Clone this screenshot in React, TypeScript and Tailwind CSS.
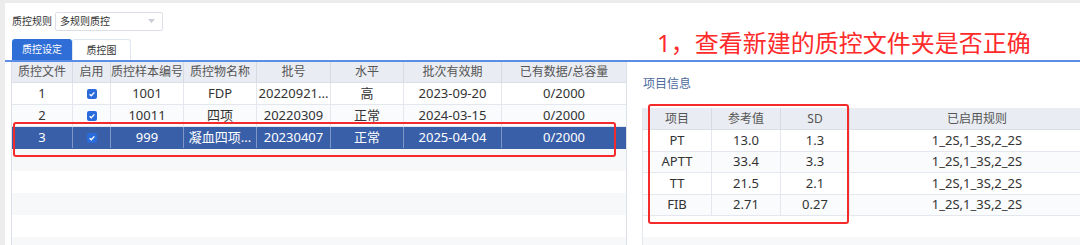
import React from "react";

const leftCols = [61, 38, 73, 73, 74, 73, 98, 124];
const leftHead = ["质控文件", "启用", "质控样本编号", "质控物名称", "批号", "水平", "批次有效期", "已有数据/总容量"];
const leftRows = [
  ["1", "", "1001", "FDP", "20220921...", "高", "2023-09-20", "0/2000"],
  ["2", "", "10011", "四项", "20220309", "正常", "2024-03-15", "0/2000"],
  ["3", "", "999", "凝血四项...", "20230407", "正常", "2025-04-04", "0/2000"],
];

const rightCols = [69, 69, 69, 254];
const rightHead = ["项目", "参考值", "SD", "已启用规则"];
const rightRows = [
  ["PT", "13.0", "1.3", "1_2S,1_3S,2_2S"],
  ["APTT", "33.4", "3.3", "1_2S,1_3S,2_2S"],
  ["TT", "21.5", "2.1", "1_2S,1_3S,2_2S"],
  ["FIB", "2.71", "0.27", "1_2S,1_3S,2_2S"],
];

function Check() {
  return (
    <span className="inline-flex w-[10px] h-[10px] rounded-[2px] bg-[#2a6bdc] items-center justify-center">
      <svg width="8" height="8" viewBox="0 0 8 8">
        <path d="M1.6 4.2 L3.3 5.8 L6.4 2.4" stroke="white" strokeWidth="1.3" fill="none" />
      </svg>
    </span>
  );
}

export default function App() {
  const font = { fontFamily: '"Noto Sans", "Noto Sans CJK SC", sans-serif' };
  return (
    <div className="w-[1080px] h-[245px] bg-[#ececec] pt-[3px] pl-[5px] overflow-hidden relative" style={font}>
      <div className="bg-white h-full flex flex-col">
        {/* rule selector */}
        <div className="flex items-center pl-[7px] pt-[8px] h-[28px]">
          <span className="text-[10px] text-[#333] w-[43px]">质控规则</span>
          <div className="w-[108px] h-[19px] border border-[#dcdfe6] rounded-[2px] flex items-center justify-between pl-[4px] pr-[7px]">
            <span className="text-[10px] text-[#333]">多规则质控</span>
            <svg width="7" height="4" viewBox="0 0 7 4"><path d="M0 0 L7 0 L3.5 4 Z" fill="#c8ccd4" /></svg>
          </div>
        </div>
        {/* tabs */}
        <div className="flex items-end pl-[7px] mt-[8px] border-b-2 border-[#5a8de3] h-[23px]">
          <div className="w-[60px] h-[21px] bg-[#2f6ed6] text-white text-[10px] rounded-t-[3px] flex items-center justify-center">质控设定</div>
          <div className="w-[59px] h-[21px] bg-white text-[#333] text-[10px] rounded-t-[3px] border border-b-0 border-[#dfe6f2] flex items-center justify-center">质控图</div>
        </div>
        {/* body */}
        <div className="flex flex-1 min-h-0 overflow-hidden">
          {/* left table */}
          <div className="ml-[6px] w-[616px] shrink-0 border-l border-r border-[#dcdfe6] flex flex-col overflow-hidden">
            <div className="flex h-[21px] bg-[#e9ecf2] border-b border-[#dcdfe6] shrink-0">
              {leftHead.map((h, i) => (
                <div key={i} style={{ width: leftCols[i] }} className="shrink-0 flex items-center justify-center text-[12px] text-[#555] border-r border-[#d6dae2] last:border-r-0 whitespace-nowrap">{h}</div>
              ))}
            </div>
            {leftRows.map((r, ri) => {
              const sel = ri === 2;
              return (
                <div key={ri} className={`flex h-[22px] shrink-0 border-b ${sel ? "bg-[#3a5fa9] border-[#3a5fa9]" : ri === 1 ? "bg-[#fafbfc] border-[#e4e7ed]" : "bg-white border-[#e4e7ed]"}`}>
                  {r.map((c, ci) => (
                    <div key={ci} style={{ width: leftCols[ci] }} className={`shrink-0 flex items-center justify-center text-[13px] whitespace-nowrap border-r last:border-r-0 ${sel ? "text-white border-[#7f97c6]" : "text-[#333] border-[#e4e7ed]"}`}>
                      {ci === 1 ? <Check /> : c}
                    </div>
                  ))}
                </div>
              );
            })}
            {[0, 1, 2, 3, 4].map((i) => (
              <div key={i} className={`h-[22px] shrink-0 ${i % 2 === 0 ? "bg-[#f7f8fa]" : "bg-white"}`} />
            ))}
          </div>
          {/* right panel */}
          <div className="flex-1 min-w-0 pl-[15px] flex flex-col">
            <div className="h-[46px] flex items-start pt-[13px] pl-[1px]">
              <span className="text-[12px] text-[#4d6b9c]">项目信息</span>
            </div>
            <div className="flex-1 border-l border-[#e4e7ed] flex flex-col overflow-hidden">
              <div className="flex h-[22px] bg-[#e9ecf2] border-b border-[#dcdfe6] shrink-0">
                {rightHead.map((h, i) => (
                  <div key={i} style={{ width: rightCols[i] }} className="shrink-0 flex items-center justify-center text-[12px] text-[#555] border-r border-[#d6dae2] last:border-r-0">{h}</div>
                ))}
              </div>
              {rightRows.map((r, ri) => (
                <div key={ri} className={`flex h-[21.6px] shrink-0 border-b border-[#e4e7ed] ${ri % 2 === 1 ? "bg-[#fafbfc]" : "bg-white"}`}>
                  {r.map((c, ci) => (
                    <div key={ci} style={{ width: rightCols[ci] }} className="shrink-0 flex items-center justify-center text-[13px] text-[#333] border-r border-[#e4e7ed] last:border-r-0 whitespace-nowrap">{c}</div>
                  ))}
                </div>
              ))}
              <div className="h-[21px] shrink-0 bg-white" />
              <div className="h-[22px] shrink-0 bg-[#f7f8fa]" />
            </div>
          </div>
        </div>
      </div>
      {/* annotations */}
      <div className="absolute left-[657px] top-[26px] text-[24px] leading-[34px] text-[#ff2a2a] whitespace-nowrap">1，查看新建的质控文件夹是否正确</div>
      <div className="absolute left-[13px] top-[122px] w-[603px] h-[35px] border-2 border-[#f52a2a] rounded-[3px]" />
      <div className="absolute left-[648px] top-[104px] w-[201px] h-[120px] border-2 border-[#f52a2a] rounded-[3px]" />
    </div>
  );
}
